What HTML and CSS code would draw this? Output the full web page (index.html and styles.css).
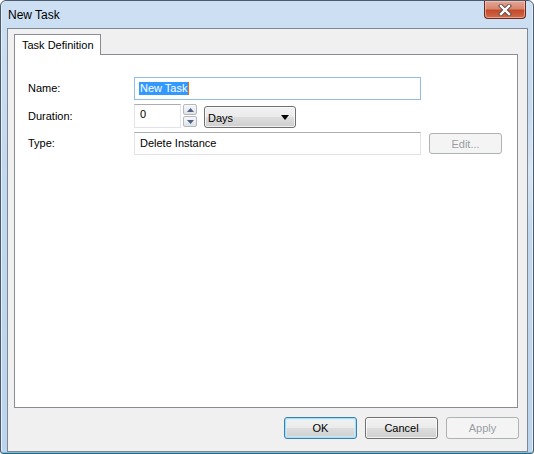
FILE: index.html
```html
<!DOCTYPE html>
<html>
<head>
<meta charset="utf-8">
<link rel="stylesheet" href="styles.css">
</head>
<body>
<div class="window">
  <div class="titlebar">
    <span class="title">New Task</span>
    <div class="close">
      <svg width="22" height="12" viewBox="0 0 22 12">
        <path d="M7 2 L15 10 M15 2 L7 10" stroke="#5a4a48" stroke-width="4.2" stroke-linecap="square"/>
        <path d="M7 2 L15 10 M15 2 L7 10" stroke="#ffffff" stroke-width="2.4" stroke-linecap="square"/>
      </svg>
    </div>
  </div>
  <div class="client">
    <div class="tabs">
      <div class="tab">Task Definition</div>
    </div>
    <div class="panel">
      <div class="row row-name">
        <label class="label">Name:</label>
        <div class="input focused"><span class="sel">New Task</span><span class="caret"></span></div>
      </div>
      <div class="row row-duration">
        <label class="label">Duration:</label>
        <div class="input small">0</div>
        <div class="spin">
          <div class="spin-btn"><svg width="7" height="4" viewBox="0 0 7 4"><path d="M0 4 L3.5 0 L7 4 Z" fill="#4d6185"/></svg></div>
          <div class="spin-btn"><svg width="7" height="4" viewBox="0 0 7 4"><path d="M0 0 L3.5 4 L7 0 Z" fill="#4d6185"/></svg></div>
        </div>
        <div class="select">
          <span>Days</span>
          <svg width="8" height="5" viewBox="0 0 8 5"><path d="M0 0 L8 0 L4 5 Z" fill="#000"/></svg>
        </div>
      </div>
      <div class="row row-type">
        <label class="label">Type:</label>
        <div class="input">Delete Instance</div>
        <div class="btn disabled edit">Edit...</div>
      </div>
    </div>
    <div class="footer">
      <div class="btn default">OK</div>
      <div class="btn">Cancel</div>
      <div class="btn disabled">Apply</div>
    </div>
  </div>
</div>
</body>
</html>
```

FILE: styles.css
```css
html, body {
  margin: 0;
  padding: 0;
  background: #ffffff;
}

body {
  width: 534px;
  height: 454px;
  overflow: hidden;
  font-family: "Liberation Sans", Arial, sans-serif;
  font-size: 11px;
  color: #000;
}

.window {
  box-sizing: border-box;
  width: 534px;
  height: 454px;
  border: 1px solid #4b5a6c;
  border-radius: 6px 6px 3px 3px;
  background:
    linear-gradient(115deg, rgba(255,255,255,0) 78%, rgba(255,255,255,0.35) 82%, rgba(255,255,255,0) 86%),
    linear-gradient(to bottom, #cde0f3 0%, #c2d8ee 40%, #bcd4ec 100%);
  box-shadow: inset 0 -1px 0 #5fc8ea, inset 1px 0 0 #e4eff9, inset -1px 0 0 #e4eff9;
  padding: 0 5px 1px 6px;
  display: flex;
  flex-direction: column;
}

.titlebar {
  height: 27px;
  display: flex;
  align-items: flex-start;
  justify-content: space-between;
}

.title {
  font-size: 12px;
  margin-left: 1px;
  margin-top: 7px;
  color: #000;
}

.close {
  box-sizing: border-box;
  width: 42px;
  height: 18px;
  margin-right: 2px;
  border: 1px solid #6b2a1f;
  border-top: none;
  border-radius: 0 0 4px 4px;
  background: linear-gradient(to bottom, #e5a592 0%, #d78670 45%, #c34b2c 55%, #d16b4a 100%);
  box-shadow: inset 0 0 0 1px rgba(255,220,210,0.5);
  display: flex;
  align-items: center;
  justify-content: center;
}

.client {
  box-sizing: border-box;
  flex: 1;
  border: 1px solid #7d8894;
  background: #f0f0f0;
  padding: 5px 8px 12px 6px;
  display: flex;
  flex-direction: column;
}

.tabs {
  display: flex;
  height: 20px;
  position: relative;
  z-index: 1;
}

.tab {
  box-sizing: border-box;
  width: 87px;
  height: 21px;
  border: 1px solid #898c95;
  border-bottom: none;
  background: #ffffff;
  padding: 4px 0 0 7px;
  white-space: nowrap;
}

.panel {
  box-sizing: border-box;
  height: 354px;
  margin-right: 1px;
  border: 1px solid #898c95;
  background: #ffffff;
  padding: 22px 0 0 13px;
  display: flex;
  flex-direction: column;
}

.row {
  display: flex;
  align-items: flex-start;
  height: 23px;
}

.row-duration {
  margin-top: 4px;
}

.row-type {
  margin-top: 5px;
}

.label {
  width: 106px;
  line-height: 23px;
}

.row-duration .label {
  line-height: 24px;
}

.input {
  box-sizing: border-box;
  width: 287px;
  height: 23px;
  border: 1px solid #e2e3ea;
  border-top-color: #abadb3;
  background: #fff;
  padding: 4px 0 0 5px;
  white-space: nowrap;
  display: flex;
  align-items: flex-start;
}

.input.focused {
  border-color: #8fbce8;
  padding-left: 4px;
}

.sel {
  background: #3399ff;
  color: #ffffff;
  padding: 0 1px;
  line-height: 13px;
  height: 13px;
}

.caret {
  display: inline-block;
  width: 1px;
  height: 13px;
  background: #e86a00;
}

.input.small {
  width: 47px;
  height: 24px;
  padding-top: 3px;
}

.spin {
  margin-left: 2px;
  display: flex;
  flex-direction: column;
  gap: 1px;
}

.spin-btn {
  box-sizing: border-box;
  width: 14px;
  height: 11px;
  border: 1px solid #b4b8bf;
  border-radius: 2px;
  background: linear-gradient(to bottom, #f6f7f9 0%, #eceef1 50%, #dfe2e6 100%);
  display: flex;
  align-items: center;
  justify-content: center;
}

.select {
  box-sizing: border-box;
  width: 92px;
  height: 22px;
  margin-left: 7px;
  margin-top: 2px;
  border: 1px solid #707070;
  border-radius: 3px;
  background: linear-gradient(to bottom, #f2f2f2 0%, #ebebeb 48%, #dddddd 52%, #cfcfcf 100%);
  box-shadow: inset 0 0 0 1px rgba(255,255,255,0.7);
  padding: 0 6px 0 3px;
  display: flex;
  align-items: center;
  justify-content: space-between;
}

.select span {
  padding-top: 1px;
}

.btn {
  box-sizing: border-box;
  width: 73px;
  height: 22px;
  border: 1px solid #707070;
  border-radius: 3px;
  background: linear-gradient(to bottom, #f2f2f2 0%, #ebebeb 48%, #dddddd 52%, #cfcfcf 100%);
  box-shadow: inset 0 0 0 1px rgba(255,255,255,0.75);
  display: flex;
  align-items: center;
  justify-content: center;
  color: #000;
}

.btn.default {
  border-color: #3c7fb1;
  box-shadow: inset 0 0 0 1px #9ee0f8, inset 0 0 0 2px rgba(210,240,252,0.6);
}

.btn.disabled {
  border-color: #adb2b5;
  background: #f4f4f4;
  box-shadow: none;
  color: #9a9ea3;
}

.edit {
  margin-left: 8px;
  margin-top: 1px;
  height: 21px;
}

.footer {
  margin-top: 9px;
  display: flex;
  justify-content: flex-end;
  gap: 8px;
}
```
